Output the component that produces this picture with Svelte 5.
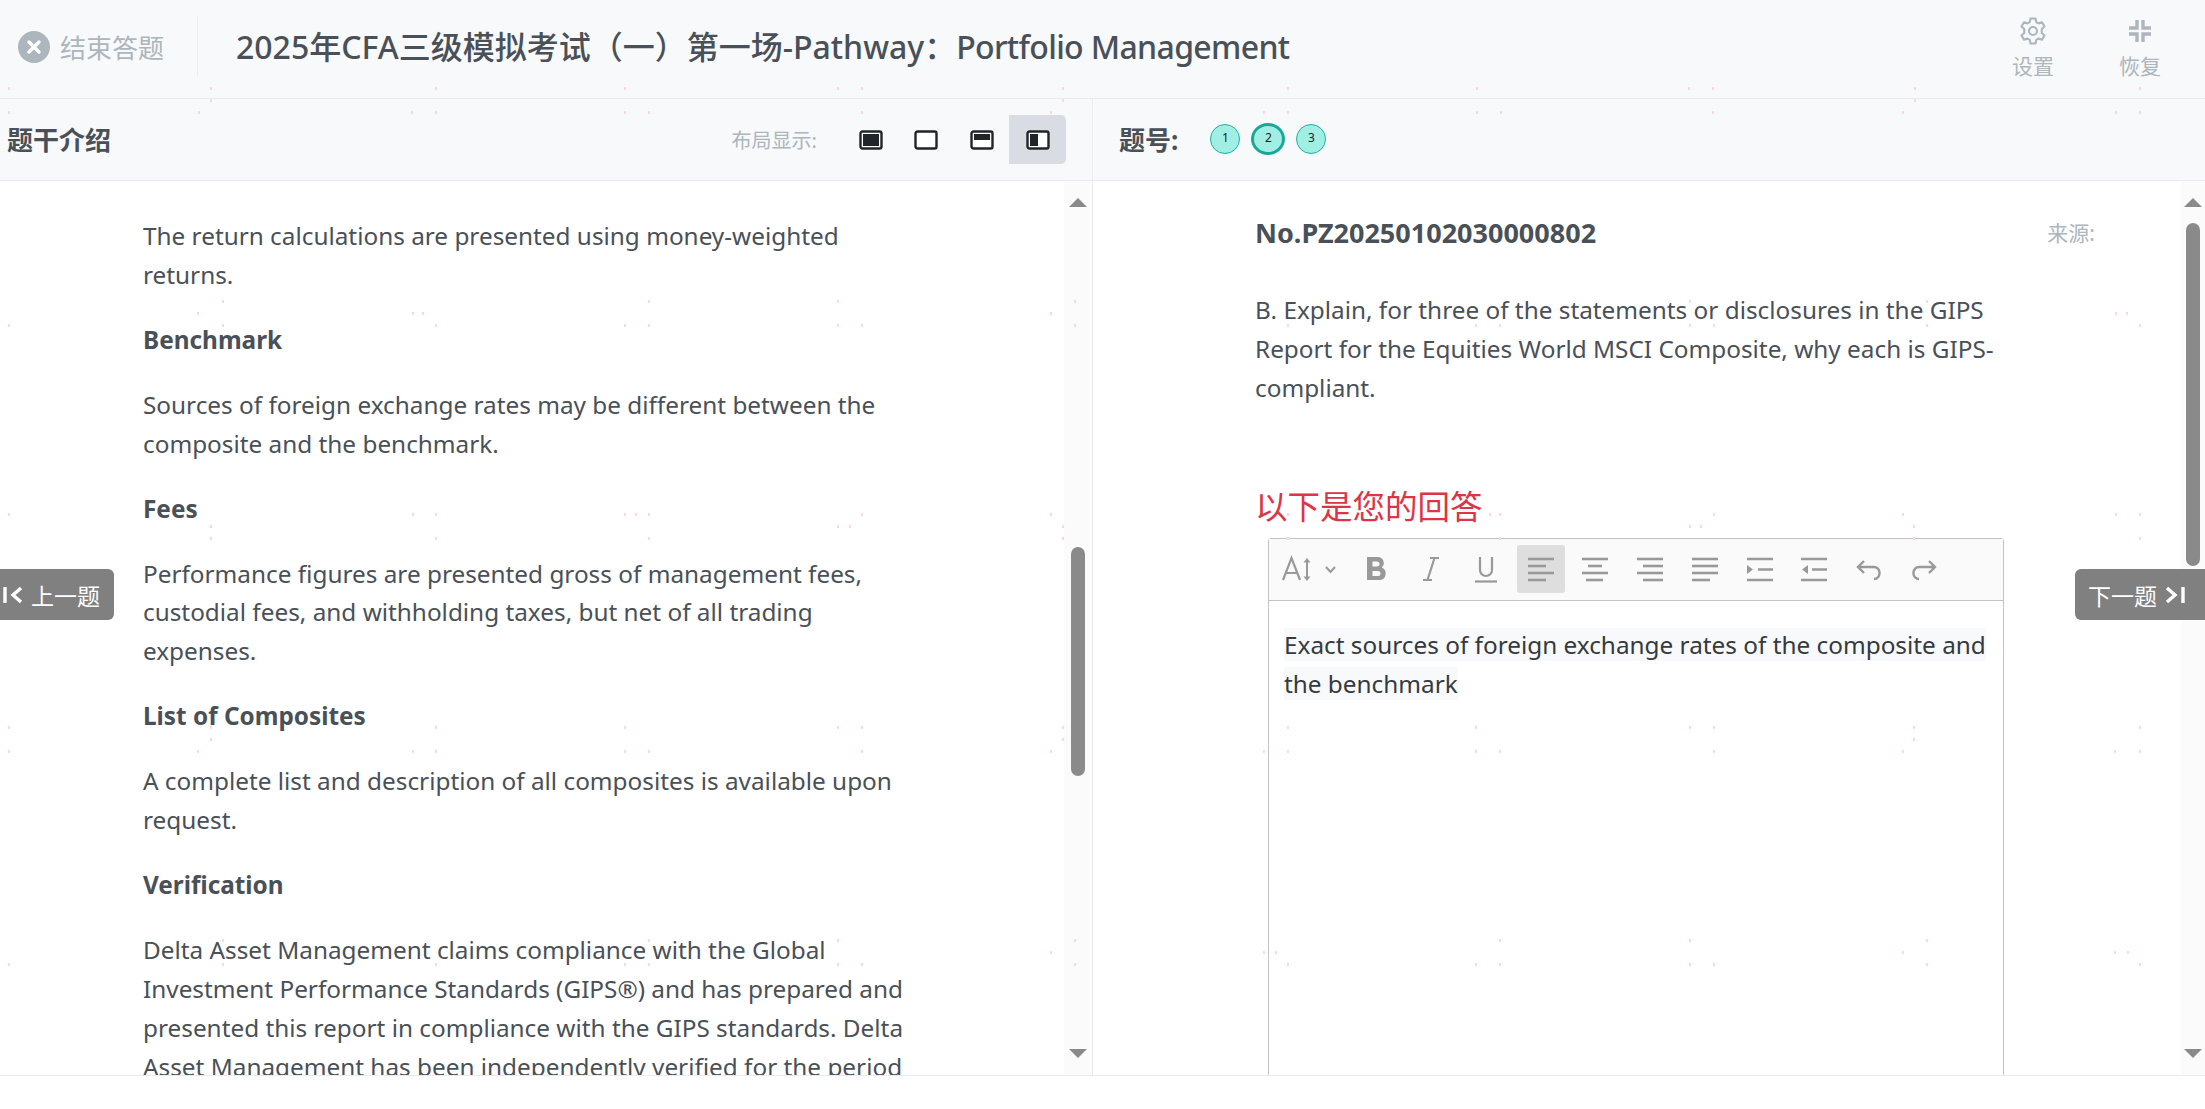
<script>
  const rowsOfDots = {
    88: [8,210,435,624,837,861,1062,1287,1476,1688,1712,1914,2139],
    100: [210,1062,1914],
    112: [8,198,411,435,624,648,861,1050,1263,1287,1476,1500,1712,1902,2115,2139],
    301: [222,648,837,1074,1689,1926],
    313: [197,412,422,1050,2115,2126],
    325: [8,222,435,624,648,837,861,1074,1287,1475,1499,1689,1713,1926,2139],
    514: [8,412,435,624,635,648,861,1050,1287,1489,1499,1713,1902,2115,2139],
    526: [210,837,849,1062,1689,1700,1913],
    538: [210,435,648,1062,1287,1499,1913,2139],
    727: [8,210,435,624,837,861,1062,1287,1475,1689,1713,1913,2139],
    739: [210,1062,1913],
    751: [8,197,412,435,624,648,861,1050,1263,1287,1475,1499,1713,1902,2114,2139],
    940: [222,648,837,1074,1499,1689,1926],
    952: [1050,1263,1275,1902,2114,2127],
    964: [8,222,435,624,648,837,861,1074,1287,1475,1499,1689,1713,1926,2139]
  };
  const dots = Object.entries(rowsOfDots).flatMap(([y, xs]) => xs.map((x) => [x, Number(y) - 1]));
  const rows = [
    ['M0 3h26','M0 10h18','M0 17h26','M0 24h18'],
    ['M0 3h26','M6 10h14','M0 17h26','M4 24h17'],
    ['M0 3h26','M6 10h20','M0 17h26','M6 24h20'],
    ['M0 3h26','M0 10h26','M0 17h26','M0 24h18']
  ];
</script>

<div class="page">
  <header class="top">
    <div class="finish">
      <svg class="x" viewBox="0 0 32 32"><circle cx="16" cy="16" r="16" fill="#adb5bd"/><path d="M11 11l10 10M21 11L11 21" stroke="#fff" stroke-width="3.4" stroke-linecap="round"/></svg>
      <span>结束答题</span>
    </div>
    <h1>2025年CFA三级模拟考试（一）第一场-Pathway：<span class="lat">Portfolio Management</span></h1>
    <div class="actions">
      <div class="act">
        <svg width="30" height="32" viewBox="0 0 24 24" fill="none" stroke="#adb5bd" stroke-width="1.7" stroke-linejoin="round"><path d="M10 2h4l.6 2.900 1.800 1 2.800-.9 2 3.400-2.200 2v3.200l2.200 2-2 3.400-2.800-.9-1.800 1L14 22h-4l-.6-2.900-1.800-1-2.800.9-2-3.400 2.200-2v-3.200l-2.200-2 2-3.400 2.800.9 1.800-1z"/><circle cx="12" cy="12" r="3.200"/></svg>
        <span>设置</span>
      </div>
      <div class="act">
        <svg width="24" height="32" viewBox="0 0 24 26" fill="none" stroke="#adb5bd" stroke-width="3.400"><path d="M9 2v8H1M15 2v8h8M9 24v-8H1M15 24v-8h8"/></svg>
        <span>恢复</span>
      </div>
    </div>
  </header>

  <main class="panes">
    <section class="pane left">
      <div class="bar">
        <strong class="bar-title">题干介绍</strong>
        <div class="layouts">
          <span class="lbl">布局显示:</span>
          <button class="lay"><svg width="24" height="20" viewBox="0 0 24 20"><rect x="1.500" y="1.500" width="21" height="17" rx="2" fill="#fff" stroke="#212529" stroke-width="2.400"/><rect x="4" y="4" width="16" height="12" fill="#212529"/></svg></button>
          <button class="lay"><svg width="24" height="20" viewBox="0 0 24 20"><rect x="1.500" y="1.500" width="21" height="17" rx="2" fill="#fff" stroke="#212529" stroke-width="2.400"/></svg></button>
          <button class="lay"><svg width="24" height="20" viewBox="0 0 24 20"><rect x="1.500" y="1.500" width="21" height="17" rx="2" fill="#fff" stroke="#212529" stroke-width="2.400"/><rect x="4" y="4" width="16" height="6" fill="#212529"/></svg></button>
          <button class="lay on"><svg width="24" height="20" viewBox="0 0 24 20"><rect x="1.500" y="1.500" width="21" height="17" rx="2" fill="#fff" stroke="#212529" stroke-width="2.400"/><rect x="4" y="4" width="8" height="12" fill="#212529"/></svg></button>
        </div>
      </div>
      <div class="body">
        <article class="content">
          <p>The return calculations are presented using money-weighted returns.</p>
          <p><b>Benchmark</b></p>
          <p>Sources of foreign exchange rates may be different between the composite and the benchmark.</p>
          <p><b>Fees</b></p>
          <p>Performance figures are presented gross of management fees, custodial fees, and withholding taxes, but net of all trading expenses.</p>
          <p><b>List of Composites</b></p>
          <p>A complete list and description of all composites is available upon request.</p>
          <p><b>Verification</b></p>
          <p>Delta Asset Management claims compliance with the Global Investment Performance Standards (GIPS®) and has prepared and presented this report in compliance with the GIPS standards. Delta Asset Management has been independently verified for the period</p>
        </article>
        <div class="sb sb-left">
          <i class="up"></i><i class="thumb"></i><i class="down"></i>
        </div>
      </div>
    </section>

    <section class="pane right">
      <div class="bar">
        <strong class="bar-title no">题号:</strong>
        <div class="nums">
          <span class="num">1</span><span class="num cur">2</span><span class="num">3</span>
        </div>
      </div>
      <div class="body">
        <article class="question">
          <div class="qhead"><b>No.PZ20250102030000802</b><span>来源:</span></div>
          <p class="qtext">B. Explain, for three of the statements or disclosures in the GIPS Report for the Equities World MSCI Composite, why each is GIPS-compliant.</p>
          <h2>以下是您的回答</h2>
          <div class="editor">
            <div class="tools">
              <span class="tool size">
                <svg width="58" height="32" viewBox="0 0 58 32" fill="none" stroke="#999"><path d="M1 27L9.500 5 18 27M4 20h11" stroke-width="2.200"/><path d="M25 7v19" stroke-width="2"/><path d="M21.500 9.500L25 5l3.500 4.500zM21.500 23.500L25 28l3.500-4.500z" fill="#999" stroke="none"/><path d="M44 14l4.500 5 4.500-5" stroke-width="2"/></svg>
              </span>
              <span class="tool"><svg width="30" height="30" viewBox="0 0 30 30"><path d="M5 3h10.500a6 6 0 0 1 4.200 10.500A6.500 6.500 0 0 1 17 26H5zM10.500 7.500v5h4.500a2.500 2.500 0 0 0 0-5zM10.500 17v5h5.500a2.500 2.500 0 0 0 0-5z" fill="#999" fill-rule="evenodd"/></svg></span>
              <span class="tool"><svg width="30" height="30" viewBox="0 0 30 30" fill="none" stroke="#999" stroke-width="2.200"><path d="M14 4h9M7 26h9M18.500 4l-7 22"/></svg></span>
              <span class="tool"><svg width="30" height="30" viewBox="0 0 30 30" fill="none" stroke="#999" stroke-width="2.200"><path d="M9 3v13a6 6 0 0 0 12 0V3"/><path d="M4 27.500h22"/></svg></span>
              {#each rows as lines, n}
                <span class="tool" class:sel={n === 0}>
                  <svg width="26" height="27" viewBox="0 0 26 27" fill="none" stroke="#999" stroke-width="2.600">
                    {#each lines as d}<path d={d}/>{/each}
                  </svg>
                </span>
              {/each}
              <span class="tool"><svg width="26" height="27" viewBox="0 0 26 27" fill="none" stroke="#999" stroke-width="2.600"><path d="M0 3h26M11 13.500h15M0 24h26"/><path d="M0 9l6 4.500L0 18z" fill="#999" stroke="none"/></svg></span>
              <span class="tool"><svg width="26" height="27" viewBox="0 0 26 27" fill="none" stroke="#999" stroke-width="2.600"><path d="M0 3h26M11 13.500h15M0 24h26"/><path d="M7 9L1 13.500 7 18z" fill="#999" stroke="none"/></svg></span>
              <span class="tool"><svg width="28" height="30" viewBox="0 0 28 30" fill="none" stroke="#999" stroke-width="2.400"><path d="M9 7l-6 6 6 6M3 13h16a5.500 5.500 0 0 1 5.500 5.500v1A5.500 5.500 0 0 1 19 25"/></svg></span>
              <span class="tool"><svg width="28" height="30" viewBox="0 0 28 30" fill="none" stroke="#999" stroke-width="2.400"><path d="M19 7l6 6-6 6M25 13H9a5.500 5.500 0 0 0-5.500 5.500v1A5.500 5.500 0 0 0 9 25"/></svg></span>
            </div>
            <div class="area"><span class="ans">Exact sources of foreign exchange rates of the composite and the benchmark</span></div>
          </div>
        </article>
        <div class="sb sb-right">
          <i class="up"></i><i class="thumb"></i><i class="down"></i>
        </div>
      </div>
    </section>
  </main>
  <div class="foot"></div>

  <button class="nav prev">
    <svg width="24" height="20" viewBox="0 0 24 20" fill="none" stroke="#fff" stroke-width="3.400"><path d="M5 2v16M21 3l-8 7 8 7"/></svg>
    <span>上一题</span>
  </button>
  <button class="nav next">
    <span>下一题</span>
    <svg width="24" height="20" viewBox="0 0 24 20" fill="none" stroke="#fff" stroke-width="3.400"><path d="M19 2v16M3 3l8 7-8 7"/></svg>
  </button>

  {#each dots as d}<i class="dot" style="left:{d[0]}px;top:{d[1]}px"></i>{/each}
</div>

<style>
  :global(body) { margin: 0; background: #fff; }
  * { box-sizing: border-box; }
  .page {
    position: relative; width: 2205px; height: 1109px; overflow: hidden;
    font-family: "Noto Sans", "Noto Sans CJK SC", sans-serif; color: #495057;
    display: flex; flex-direction: column;
  }
  .top {
    height: 99px; flex: none; background: #f8f9fa; border-bottom: 1px solid #e9ecef;
    display: flex; align-items: center; padding-left: 18px;
  }
  .finish {
    display: flex; align-items: center; gap: 10px; height: 60px; width: 180px;
    margin-top: -4px; border-right: 1px solid #eceef1; color: #adb5bd; font-size: 26px;
  }
  .x { width: 32px; height: 32px; }
  h1 { margin: -4px 0 0 38px; font-size: 32px; font-weight: 500; line-height: 1; flex: 1; color: #495057; }
  .lat { letter-spacing: -0.65px; }
  .actions { display: flex; gap: 65px; padding-right: 44px; margin-top: -4px; }
  .act { display: flex; flex-direction: column; align-items: center; gap: 6px; color: #adb5bd; font-size: 21px; line-height: 26px; }

  .panes { flex: none; height: 977px; display: flex; border-bottom: 1px solid #e9ecef; }
  .pane { display: flex; flex-direction: column; min-width: 0; }
  .left { width: 1093px; border-right: 1px solid #e9ecef; flex: none; }
  .right { flex: 1; }
  .bar {
    height: 82px; flex: none; background: #f8f9fa; border-bottom: 1px solid #e9ecef;
    display: flex; align-items: center;
  }
  .left .bar { padding: 0 26px 0 7px; justify-content: space-between; }
  .right .bar { padding-left: 26px; }
  .bar-title { font-size: 26px; font-weight: 700; color: #495057; margin-top: -1px; }
  .layouts { display: flex; align-items: center; }
  .lbl { font-size: 20px; color: #adb5bd; margin-right: 27px; }
  .lay {
    width: 56.4px; height: 49px; border: 0; background: none; padding: 0;
    display: flex; align-items: center; justify-content: center; margin-left: -1px;
  }
  .lay.on { width: 57px; border-radius: 0 5px 5px 0; background: #d9dde3; }
  .nums { display: flex; align-items: center; gap: 13px; margin-left: 32px; margin-top: -1px; }
  .num {
    width: 30px; height: 30px; border-radius: 50%; background: #a1efe4; border: 1px solid #17b3a0; padding-bottom: 4px;
    display: flex; align-items: center; justify-content: center; font-size: 12px; color: #222;
  }
  .num.cur { width: 34px; height: 32px; border: 3px solid #17a998; margin: 0 -2px; }

  .body { flex: 1; display: flex; min-height: 0; overflow: hidden; position: relative; }
  .content { flex: 1; padding: 0 155px 0 143px; font-size: 24.33px; line-height: 1.6; min-width: 0; }
  .content p { margin: 0 0 26px; }
  .content p:first-child { margin-top: 36px; }
  .content b { font-weight: 700; }
  .sb { flex: none; width: 28px; position: relative; background: #fbfbfb; }
  .sb i { position: absolute; display: block; }
  .sb .up { top: 17px; left: 5px; border: 9px solid transparent; border-top: 0; border-bottom: 9px solid #8a8a8a; }
  .sb .down { bottom: 17px; left: 5px; border: 9px solid transparent; border-bottom: 0; border-top: 9px solid #8a8a8a; }
  .sb .thumb { left: 7px; width: 14px; background: #8a8a8a; border-radius: 7px; }
  .sb-left .thumb { top: 366px; height: 229px; }
  .sb-right { width: 24px; margin-left: auto; }
  .sb-right .thumb { top: 42px; height: 343px; left: 5px; }
  .sb-right .up { left: 3px; }
  .sb-right .down { left: 3px; }

  .question { flex: 1; padding: 32px 86px 0 162px; font-size: 24.33px; line-height: 1.6; min-width: 0; }
  .qhead { display: flex; justify-content: space-between; align-items: center; line-height: 40px; }
  .qhead b { font-weight: 700; font-size: 27px; }
  .qhead span { font-size: 21px; color: #adb5bd; }
  .qtext { margin: 38px 0 0; max-width: 760px; }
  h2 { margin: 79px 0 0; font-size: 32.5px; line-height: 40px; font-weight: 400; color: #dc3545; }
  .editor { margin: 11px 0 0 13px; width: 736px; border: 1px solid #c4c4c4; border-radius: 3px 3px 0 0; height: 700px; }
  .tools {
    height: 62px; background: #fafafa; border-bottom: 1px solid #c4c4c4;
    display: flex; align-items: center; padding-left: 7px; gap: 6.7px;
  }
  .tool { width: 48px; height: 48px; display: flex; align-items: center; justify-content: center; border-radius: 3px; flex: none; }
  .tool.size { width: 70px; }
  .tool.sel { background: #dedede; }
  .area { padding: 24px 10px 14px 15px; line-height: 39px; color: #343a40; font-size: 24.33px; }
  .ans { background: #f8f9fa; box-decoration-break: clone; -webkit-box-decoration-break: clone; }

  .foot { flex: 1; background: #fff; }
  .nav {
    position: absolute; top: 569px; height: 51px; border: 0; background: #808080; color: #fff;
    display: flex; align-items: center; font-family: inherit; font-size: 23px; padding: 0; gap: 7px;
  }
  .prev { left: 0; width: 114px; border-radius: 0 6px 6px 0; }
  .next { right: 0; width: 130px; border-radius: 6px 0 0 6px; padding-left: 13px; }
  .dot { position: absolute; width: 2px; height: 3px; background: #ffd5dc; }
</style>
